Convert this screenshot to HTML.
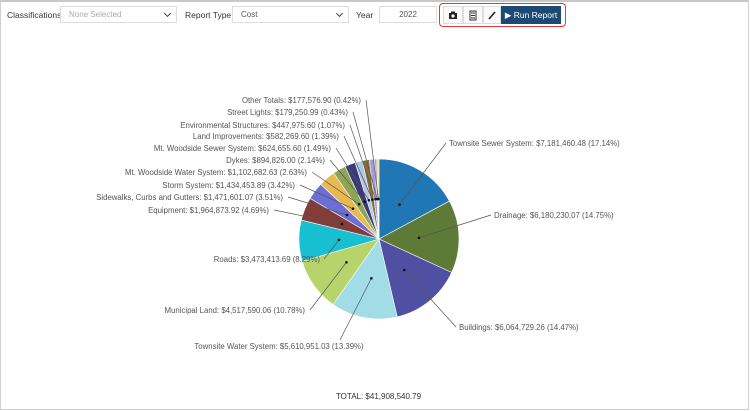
<!DOCTYPE html>
<html><head><style>
body{margin:0;width:750px;height:411px;overflow:hidden;background:#fff;font-family:"Liberation Sans",sans-serif;}
.frame{position:absolute;left:0;top:0;width:749px;height:410px;border-top:2px solid #c8c8c8;border-left:1px solid #d0d0d0;border-right:1px solid #d0d0d0;border-bottom:1px solid #d0d0d0;box-sizing:border-box}
.lbl{position:absolute;font-size:8.5px;color:#333;top:10px}
.box{position:absolute;top:6px;height:17px;border:1px solid #ddd;box-sizing:border-box;font-size:8px;color:#555;line-height:15px;padding-left:8px}
.chev{position:absolute;right:6px;top:4px;width:4px;height:4px;border-right:1.2px solid #444;border-bottom:1.2px solid #444;transform:rotate(45deg)}
.grp{position:absolute;left:439px;top:3px;width:127px;height:24px;border:1.5px solid #e03a3a;border-radius:4px;box-sizing:border-box}
.b{position:absolute;top:6px;height:18px;border:1px solid #ddd;box-sizing:border-box;background:#fafafa}
</style></head><body>
<div class="frame"></div>
<div class="lbl" style="left:7px">Classifications</div>
<div class="box" style="left:60px;width:117px;color:#aaa">None Selected<div class="chev"></div></div>
<div class="lbl" style="left:185px">Report Type</div>
<div class="box" style="left:232px;width:117px">Cost<div class="chev"></div></div>
<div class="lbl" style="left:356px">Year</div>
<div class="box" style="left:379px;width:58px;text-align:center;padding:0">2022</div>
<div class="grp"></div>
<div class="b" style="left:443px;width:20px"><svg width="18" height="16"><rect x="5" y="6" width="8" height="6" fill="#222"/><rect x="7" y="4.5" width="4" height="2" fill="#222"/><circle cx="9" cy="9" r="1.6" fill="#fff"/></svg></div>
<div class="b" style="left:463px;width:20px"><svg width="18" height="16"><rect x="6" y="4" width="6" height="9" fill="none" stroke="#333"/><line x1="7" y1="6" x2="11" y2="6" stroke="#333"/><line x1="7" y1="8.5" x2="11" y2="8.5" stroke="#333"/><line x1="7" y1="11" x2="11" y2="11" stroke="#333"/></svg></div>
<div class="b" style="left:483px;width:18px"><svg width="16" height="16"><line x1="5" y1="12" x2="11" y2="5" stroke="#222" stroke-width="1.6"/></svg></div>
<div style="position:absolute;left:501px;top:6px;width:60px;height:18px;background:#1d4a72;color:#fff;font-size:8.5px;line-height:18px;white-space:nowrap;text-align:center">&#9654; Run Report</div>
<svg id="pie" width="750" height="411" style="position:absolute;left:0;top:0"></svg>
<div style="position:absolute;left:0;width:757px;top:392px;text-align:center;font-size:8px;color:#333">TOTAL: $41,908,540.79</div>
<script>
var d=[
["Townsite Sewer System: $7,181,460.48 (17.14%)",17.14,"#2077b4",449,146,"L"],
["Drainage: $6,180,230.07 (14.75%)",14.75,"#5e7a37",494,218,"L"],
["Buildings: $6,064,729.26 (14.47%)",14.47,"#5050a3",459,330,"L"],
["Townsite Water System: $5,610,951.03 (13.39%)",13.39,"#a1dce7",279,349,"M"],
["Municipal Land: $4,517,590.06 (10.78%)",10.78,"#b7d46c",306,313,"R"],
["Roads: $3,473,413.69 (8.29%)",8.29,"#17bfd0",321,262,"R"],
["Equipment: $1,964,873.92 (4.69%)",4.69,"#843c39",270,213,"R"],
["Sidewalks, Curbs and Gutters: $1,471,601.07 (3.51%)",3.51,"#6b6ed4",284,200,"R"],
["Storm System: $1,434,453.89 (3.42%)",3.42,"#e7b94f",296,188,"R"],
["Mt. Woodside Water System: $1,102,682.63 (2.63%)",2.63,"#8ea553",308,175,"R"],
["Dykes: $894,826.00 (2.14%)",2.14,"#393b79",326,163,"R"],
["Mt. Woodside Sewer System: $624,655.60 (1.49%)",1.49,"#aec7e8",332,151,"R"],
["Land Improvements: $582,269.60 (1.39%)",1.39,"#8c6d31",340,139,"R"],
["Environmental Structures: $447,975.60 (1.07%)",1.07,"#9c9ede",346,128,"R"],
["Street Lights: $179,250.99 (0.43%)",0.43,"#c49c94",349,115,"R"],
["Other Totals: $177,576.90 (0.42%)",0.42,"#dbdb8d",362,103,"R"]];
var cx=379,cy=239,r=80,a=-Math.PI/2,s="",tot=100.03;
d.forEach(function(e,i){var da=e[1]/tot*2*Math.PI,b=a+da;
var x1=cx+r*Math.cos(a),y1=cy+r*Math.sin(a),x2=cx+r*Math.cos(b),y2=cy+r*Math.sin(b);
s+='<path d="M'+cx+','+cy+'L'+x1+','+y1+'A'+r+','+r+' 0 '+(da>Math.PI?1:0)+' 1 '+x2+','+y2+'Z" fill="'+e[2]+'" stroke="#fff" stroke-width="0.6"/>';
var m=(a+b)/2,dx=cx+r*0.5*Math.cos(m),dy=cy+r*0.5*Math.sin(m);
var lx,ly,anc;
if(e[5]=="L"){lx=e[3]-3;ly=e[4]-3;anc="start";}
else if(e[5]=="M"){lx=cx-39;ly=e[4]-9;anc="middle";}
else{lx=e[3]+4;ly=e[4]-3;anc="end";}
if(i==5){lx=324;ly=259;}
e.push(dx,dy,lx,ly,anc);a=b;});
var t="";
d.forEach(function(e){
t+='<line x1="'+e[8]+'" y1="'+e[9]+'" x2="'+e[6]+'" y2="'+e[7]+'" stroke="#555" stroke-width="0.7"/><circle cx="'+e[6]+'" cy="'+e[7]+'" r="1.3" fill="#111"/>';
var tx=e[5]=="L"?e[3]:(e[5]=="M"?e[3]:e[3]-1);
t+='<text x="'+tx+'" y="'+e[4]+'" font-size="7.8" fill="#555" text-anchor="'+e[10]+'" font-family="Liberation Sans">'+e[0]+'</text>';});
document.getElementById("pie").innerHTML=s+t;
</script>
</body></html>
